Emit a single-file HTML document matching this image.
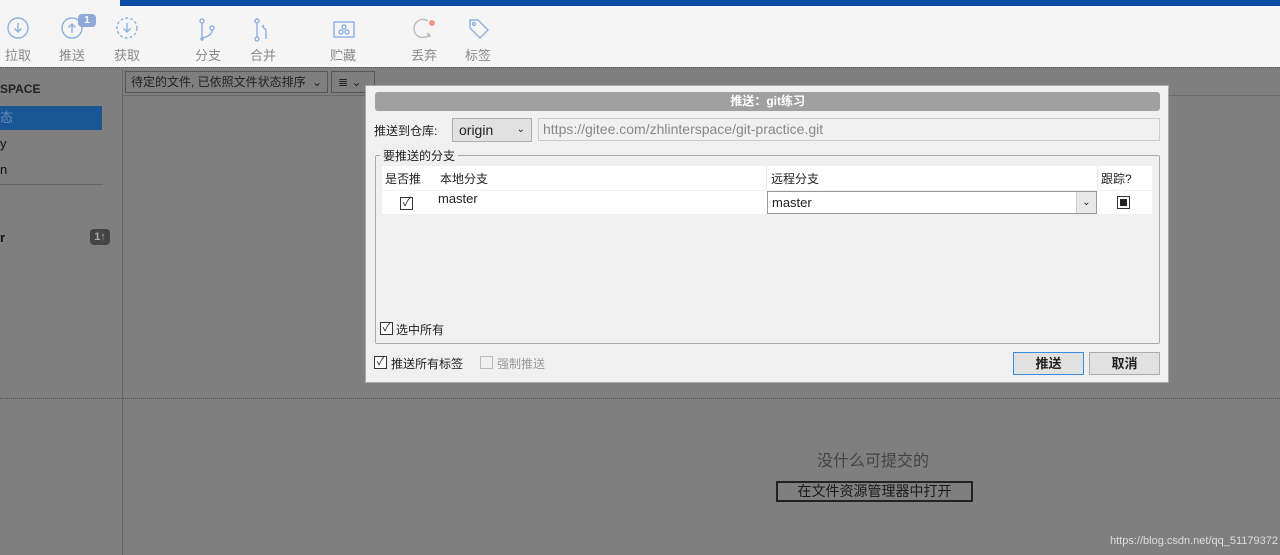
<!DOCTYPE html>
<html><head><meta charset="utf-8"><style>
*{margin:0;padding:0;box-sizing:border-box}
body{width:1280px;height:555px;overflow:hidden;background:#7f7f7f;font-family:"Liberation Sans","Noto Sans CJK SC",sans-serif;position:relative;font-size:12px;color:#222}
.a{position:absolute;white-space:nowrap}
.tb{left:0;top:0;width:1280px;height:67px;background:#f5f5f5}
.blue{left:120px;top:0;width:1160px;height:6px;background:#0b4aa6}
.lbl{font-size:13px;color:#8a8a8a;top:45px;width:40px;text-align:center}
.dlg{left:365px;top:85px;width:804px;height:298px;background:#f0f0f0;border:1px solid #aaa}
.cb{width:13px;height:13px;border:1px solid #333;background:#fff;font-size:11px;line-height:11px;text-align:center}
.btn{height:23px;border:1px solid #adadad;background:#e1e1e1;text-align:center;line-height:21px;font-weight:bold;font-size:13px}
</style></head><body>
<div class="a tb"></div>
<div class="a blue"></div>
<div class="a" style="left:0;top:67px;width:1280px;border-top:1px dotted #555"></div>
<div class="a" style="left:0;top:398px;width:1280px;border-top:1px dotted #555"></div>
<div class="a" style="left:122px;top:70px;width:1px;height:485px;background:#666"></div>
<svg class="a" style="left:0;top:14px" width="500" height="30" fill="none" stroke="#8fb0e0" stroke-width="1.4">
<circle cx="18" cy="14" r="10"/><path d="M18 9v9M14.5 14.5l3.5 3.5 3.5-3.5"/>
<circle cx="72" cy="14" r="10"/><path d="M72 19v-9M68.5 13.5l3.5-3.5 3.5 3.5"/>
<circle cx="127" cy="14" r="10" stroke-dasharray="3 2"/><path d="M127 9v9M123.5 14.5l3.5 3.5 3.5-3.5"/>
<circle cx="202" cy="7" r="2"/><circle cx="212" cy="14" r="2"/><path d="M202 9v15M212 16c0 5-5 7-10 8"/><circle cx="202" cy="25" r="1"/>
<circle cx="257" cy="7" r="2"/><circle cx="257" cy="25" r="2"/><path d="M257 9v14M266 25v-9l-3-3M262 13l2-2"/>
<rect x="334" y="8" width="20" height="15"/><circle cx="344" cy="13" r="2"/><circle cx="341" cy="18" r="2"/><circle cx="347" cy="18" r="2"/>
<path d="M430 20a9 9 0 1 1-2-13" stroke="#bbb"/><path d="M427 19l3 3-4 1" stroke="#bbb"/>
<path d="M470 6h8l10 10-8 8-10-10z"/><circle cx="474" cy="10" r="1.5"/>
</svg>
<div class="a" style="left:429px;top:20px;width:6px;height:6px;border-radius:50%;background:#f39a86"></div>
<div class="a" style="left:78px;top:14px;width:18px;height:13px;border-radius:4px;background:#8fa9d8;color:#fff;font-size:10px;font-weight:bold;text-align:center;line-height:13px">1</div>
<div class="a lbl" style="left:-2px">拉取</div>
<div class="a lbl" style="left:52px">推送</div>
<div class="a lbl" style="left:107px">获取</div>
<div class="a lbl" style="left:188px">分支</div>
<div class="a lbl" style="left:243px">合并</div>
<div class="a lbl" style="left:323px">贮藏</div>
<div class="a lbl" style="left:404px">丢弃</div>
<div class="a lbl" style="left:458px">标签</div>
<div class="a" style="left:0;top:82px;font-size:12px;font-weight:bold;color:#222">SPACE</div>
<div class="a" style="left:0;top:106px;width:102px;height:24px;background:#1a5596;color:#6a8cb5;line-height:24px;font-size:13px">态</div>
<div class="a" style="left:0;top:136px;color:#111;font-size:13px">y</div>
<div class="a" style="left:0;top:162px;color:#111;font-size:13px">n</div>
<div class="a" style="left:0;top:184px;width:103px;height:1px;background:#666"></div>
<div class="a" style="left:0;top:230px;font-weight:bold;color:#111;font-size:13px">r</div>
<div class="a" style="left:90px;top:229px;width:20px;height:16px;border-radius:4px;background:#444;color:#aaa;font-size:11px;font-weight:bold;text-align:center;line-height:16px">1↑</div>
<div class="a" style="left:125px;top:71px;width:203px;height:22px;border:1px solid #555;color:#222;line-height:20px;padding-left:5px;font-size:12px">待定的文件, 已依照文件状态排序<span style="position:absolute;right:5px">⌄</span></div>
<div class="a" style="left:331px;top:71px;width:44px;height:22px;border:1px solid #555;color:#222;line-height:20px;padding-left:6px">≣ ⌄</div>
<div class="a" style="left:122px;top:95px;width:1158px;height:1px;background:#6a6a6a"></div>
<div class="a" style="left:773px;top:447px;width:200px;text-align:center;font-size:16px;color:#444">没什么可提交的</div>
<div class="a" style="left:776px;top:481px;width:197px;height:21px;border:2px solid #222;text-align:center;line-height:17px;font-size:14px;color:#1a1a1a">在文件资源管理器中打开</div>
<div class="a" style="left:1110px;top:535px;font-size:11px;color:#ddd">https://blog.csdn.net/qq_51179372</div>
<div class="a dlg"></div>
<div class="a" style="left:375px;top:92px;width:785px;height:19px;background:#a0a0a0;border-radius:3px;color:#fff;font-weight:bold;text-align:right;padding-right:355px;line-height:19px;font-size:12px">推送：git练习</div>
<div class="a" style="left:374px;top:122px">推送到仓库:</div>
<div class="a" style="left:452px;top:118px;width:80px;height:24px;border:1px solid #adadad;background:#e1e1e1;padding-left:6px;line-height:22px;font-size:14px">origin<span style="position:absolute;right:6px;font-size:10px">⌄</span></div>
<div class="a" style="left:538px;top:118px;width:622px;height:23px;border:1px solid #ccc;background:#f0f0f0;padding-left:4px;line-height:21px;color:#888;font-size:14px">https://gitee.com/zhlinterspace/git-practice.git</div>
<div class="a" style="left:375px;top:155px;width:785px;height:189px;border:1px solid #aaa;border-radius:2px"></div>
<div class="a" style="left:380px;top:147px;background:#f0f0f0;padding:0 3px">要推送的分支</div>
<div class="a" style="left:382px;top:166px;width:770px;height:48px;background:#fff"></div>
<div class="a" style="left:382px;top:190px;width:770px;height:1px;background:#f0f0f0"></div>
<div class="a" style="left:766px;top:166px;width:1px;height:24px;background:#e5e5e5"></div>
<div class="a" style="left:1097px;top:166px;width:1px;height:24px;background:#e5e5e5"></div>
<div class="a" style="left:385px;top:170px">是否推</div>
<div class="a" style="left:440px;top:170px">本地分支</div>
<div class="a" style="left:771px;top:170px">远程分支</div>
<div class="a" style="left:1101px;top:170px">跟踪?</div>
<div class="a cb" style="left:400px;top:197px">✓</div>
<div class="a" style="left:438px;top:191px;font-size:13px">master</div>
<div class="a" style="left:767px;top:191px;width:330px;height:23px;border:1px solid #999;background:#fff;padding-left:4px;line-height:21px;font-size:13px">master<span style="position:absolute;right:0;top:0;width:20px;height:21px;background:#e8e8e8;border-left:1px solid #ccc;text-align:center;font-size:10px">⌄</span></div>
<div class="a" style="left:1117px;top:196px;width:13px;height:13px;border:1px solid #333;background:#fff"><div style="margin:2px;width:7px;height:7px;background:#222"></div></div>
<div class="a cb" style="left:380px;top:322px">✓</div>
<div class="a" style="left:396px;top:321px">选中所有</div>
<div class="a cb" style="left:374px;top:356px">✓</div>
<div class="a" style="left:391px;top:355px">推送所有标签</div>
<div class="a cb" style="left:480px;top:356px;border-color:#bbb;background:#f0f0f0"></div>
<div class="a" style="left:497px;top:355px;color:#999">强制推送</div>
<div class="a btn" style="left:1013px;top:352px;width:71px;border:1px solid #3c8be0">推送</div>
<div class="a btn" style="left:1089px;top:352px;width:71px">取消</div>
</body></html>
